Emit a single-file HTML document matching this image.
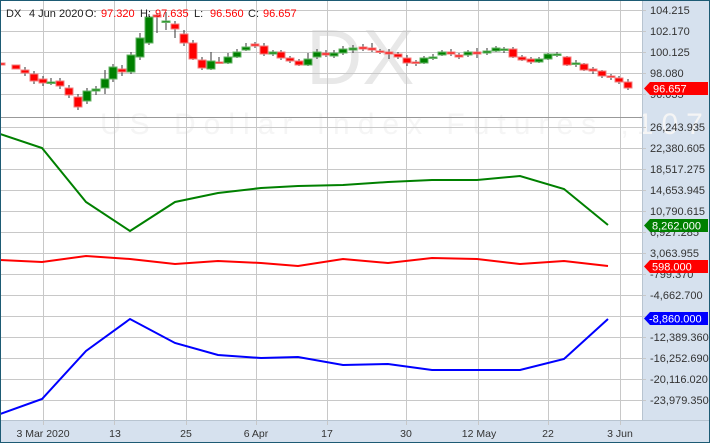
<!DOCTYPE html>
<html><head><meta charset="utf-8"><style>
html,body{margin:0;padding:0;background:#fff;}
body{width:710px;height:443px;overflow:hidden;font-family:"Liberation Sans",sans-serif;}
</style></head><body>
<svg width="710" height="443" xmlns="http://www.w3.org/2000/svg" font-family="Liberation Sans, sans-serif">
<rect width="710" height="443" fill="#fff"/>
<rect x="642" y="0" width="68" height="443" fill="#d6e1ee"/>
<rect x="0" y="420" width="710" height="23" fill="#d6e1ee"/>
<text x="306" y="84" font-size="78" fill="#e8e8e8">DX</text>
<text x="100" y="134" font-size="30" fill="#f5f5f5" letter-spacing="8">US Dollar Index Futures ,107</text>
<g stroke="#c8c8c8" stroke-width="1">
<line x1="0" y1="10.5" x2="646" y2="10.5"/><line x1="0" y1="31.5" x2="646" y2="31.5"/><line x1="0" y1="52.5" x2="646" y2="52.5"/><line x1="0" y1="73.5" x2="646" y2="73.5"/><line x1="0" y1="94.5" x2="646" y2="94.5"/>
<line x1="0" y1="127.5" x2="646" y2="127.5"/><line x1="0" y1="148.5" x2="646" y2="148.5"/><line x1="0" y1="169.5" x2="646" y2="169.5"/><line x1="0" y1="190.5" x2="646" y2="190.5"/><line x1="0" y1="211.5" x2="646" y2="211.5"/><line x1="0" y1="232.5" x2="646" y2="232.5"/><line x1="0" y1="253.5" x2="646" y2="253.5"/><line x1="0" y1="274.5" x2="646" y2="274.5"/><line x1="0" y1="295.5" x2="646" y2="295.5"/><line x1="0" y1="316.5" x2="646" y2="316.5"/><line x1="0" y1="337.5" x2="646" y2="337.5"/><line x1="0" y1="358.5" x2="646" y2="358.5"/><line x1="0" y1="379.5" x2="646" y2="379.5"/><line x1="0" y1="400.5" x2="646" y2="400.5"/>
<line x1="43.5" y1="0" x2="43.5" y2="425"/><line x1="114.5" y1="0" x2="114.5" y2="425"/><line x1="186.5" y1="0" x2="186.5" y2="425"/><line x1="256.5" y1="0" x2="256.5" y2="425"/><line x1="327.5" y1="0" x2="327.5" y2="425"/><line x1="406.5" y1="0" x2="406.5" y2="425"/><line x1="478.5" y1="0" x2="478.5" y2="425"/><line x1="548.5" y1="0" x2="548.5" y2="425"/><line x1="620.5" y1="0" x2="620.5" y2="425"/>
</g>
<line x1="0" y1="117.5" x2="642" y2="117.5" stroke="#999"/>
<line x1="0" y1="420.5" x2="710" y2="420.5" stroke="#b8c4d0"/>
<line x1="642.5" y1="0" x2="642.5" y2="420" stroke="#b8c4d0"/>
<g>
<g stroke="#333" stroke-width="1">
<line x1="25" y1="67" x2="25" y2="76"/><line x1="34" y1="71" x2="34" y2="84"/><line x1="43" y1="76" x2="43" y2="86"/><line x1="51" y1="78" x2="51" y2="85"/><line x1="60" y1="78" x2="60" y2="89"/><line x1="69" y1="85" x2="69" y2="98"/><line x1="78" y1="94" x2="78" y2="110"/><line x1="87" y1="88" x2="87" y2="104"/><line x1="96" y1="86" x2="96" y2="95"/><line x1="105" y1="70" x2="105" y2="94"/><line x1="113" y1="64" x2="113" y2="82"/><line x1="122" y1="65" x2="122" y2="76"/><line x1="131" y1="52" x2="131" y2="74"/><line x1="140" y1="33" x2="140" y2="60"/><line x1="149" y1="14" x2="149" y2="45"/><line x1="157" y1="13" x2="157" y2="33"/><line x1="166" y1="12" x2="166" y2="30"/><line x1="175" y1="21" x2="175" y2="38"/><line x1="184" y1="30" x2="184" y2="46"/><line x1="193" y1="40" x2="193" y2="60"/><line x1="202" y1="57" x2="202" y2="70"/><line x1="211" y1="52" x2="211" y2="70"/><line x1="219" y1="57" x2="219" y2="64"/><line x1="228" y1="53" x2="228" y2="64"/><line x1="237" y1="49" x2="237" y2="58"/><line x1="246" y1="43" x2="246" y2="51"/><line x1="255" y1="42" x2="255" y2="48"/><line x1="264" y1="43" x2="264" y2="56"/><line x1="273" y1="50" x2="273" y2="56"/><line x1="281" y1="50" x2="281" y2="60"/><line x1="290" y1="56" x2="290" y2="63"/><line x1="299" y1="59" x2="299" y2="66"/><line x1="308" y1="53" x2="308" y2="66"/><line x1="317" y1="49" x2="317" y2="59"/><line x1="326" y1="50" x2="326" y2="57"/><line x1="334" y1="50" x2="334" y2="58"/><line x1="343" y1="46" x2="343" y2="55"/><line x1="353" y1="45" x2="353" y2="53"/><line x1="363" y1="44" x2="363" y2="51"/><line x1="372" y1="43" x2="372" y2="52"/><line x1="380" y1="49" x2="380" y2="54"/><line x1="389" y1="49" x2="389" y2="59"/><line x1="398" y1="52" x2="398" y2="59"/><line x1="407" y1="55" x2="407" y2="66"/><line x1="416" y1="60" x2="416" y2="66"/><line x1="424" y1="56" x2="424" y2="64"/><line x1="433" y1="54" x2="433" y2="60"/><line x1="442" y1="50" x2="442" y2="56"/><line x1="451" y1="49" x2="451" y2="56"/><line x1="459" y1="53" x2="459" y2="59"/><line x1="468" y1="50" x2="468" y2="57"/><line x1="477" y1="48" x2="477" y2="58"/><line x1="487" y1="48" x2="487" y2="55"/><line x1="496" y1="46" x2="496" y2="52"/><line x1="504" y1="47" x2="504" y2="53"/><line x1="513" y1="47" x2="513" y2="58"/><line x1="522" y1="55" x2="522" y2="61"/><line x1="531" y1="57" x2="531" y2="64"/><line x1="539" y1="57" x2="539" y2="63"/><line x1="548" y1="53" x2="548" y2="60"/><line x1="557" y1="52" x2="557" y2="57"/><line x1="567" y1="56" x2="567" y2="66"/><line x1="576" y1="60" x2="576" y2="67"/><line x1="584" y1="63" x2="584" y2="71"/><line x1="593" y1="67" x2="593" y2="74"/><line x1="602" y1="70" x2="602" y2="78"/><line x1="611" y1="74" x2="611" y2="80"/><line x1="619" y1="76" x2="619" y2="84"/><line x1="628" y1="79" x2="628" y2="90"/>
</g>
<g fill="#ff0000" stroke="#f08080">
<rect x="0" y="63" width="5" height="2"/><rect x="12" y="65" width="8" height="4"/><rect x="21" y="70" width="8" height="3"/><rect x="30" y="74" width="8" height="7"/><rect x="39" y="79" width="8" height="4"/><rect x="56" y="81" width="8" height="5"/><rect x="65" y="88" width="8" height="7"/><rect x="74" y="97" width="8" height="10"/><rect x="118" y="69" width="8" height="3"/><rect x="153" y="15" width="8" height="2"/><rect x="171" y="24" width="8" height="5"/><rect x="180" y="34" width="8" height="9"/><rect x="189" y="43" width="8" height="16"/><rect x="198" y="60" width="8" height="8"/><rect x="215" y="62" width="8" height="1.5"/><rect x="251" y="44" width="8" height="2"/><rect x="260" y="46" width="8" height="8"/><rect x="277" y="52" width="8" height="6"/><rect x="286" y="58" width="8" height="3"/><rect x="295" y="61" width="8" height="4"/><rect x="322" y="53" width="8" height="2"/>
<rect x="359" y="47" width="8" height="2"/><rect x="368" y="48" width="8" height="2"/><rect x="376" y="51" width="8" height="1.5"/><rect x="385" y="52" width="8" height="2"/><rect x="394" y="54" width="8" height="3"/><rect x="403" y="58" width="8" height="5"/><rect x="412" y="62" width="8" height="1.5"/><rect x="447" y="52" width="8" height="2"/><rect x="455" y="55" width="8" height="2"/><rect x="473" y="52" width="8" height="2"/><rect x="509" y="49" width="8" height="8"/><rect x="518" y="57" width="8" height="3"/><rect x="527" y="59" width="8" height="3"/><rect x="563" y="57" width="8" height="8"/><rect x="580" y="64" width="8" height="6"/><rect x="589" y="69" width="8" height="2"/><rect x="598" y="71" width="8" height="5"/><rect x="607" y="76" width="8" height="1.5"/><rect x="615" y="78" width="8" height="4"/><rect x="624" y="82" width="8" height="6"/>
</g>
<g fill="#008000" stroke="#66b366">
<rect x="47" y="82" width="8" height="1.5"/><rect x="83" y="91" width="8" height="10"/><rect x="92" y="89" width="8" height="2"/><rect x="101" y="79" width="8" height="9"/><rect x="109" y="67" width="8" height="12"/><rect x="127" y="55" width="8" height="17"/><rect x="136" y="38" width="8" height="19"/><rect x="145" y="17" width="8" height="26"/><rect x="162" y="21" width="8" height="1.5"/><rect x="207" y="61" width="8" height="8"/><rect x="224" y="57" width="8" height="6"/><rect x="233" y="52" width="8" height="5"/><rect x="242" y="47" width="8" height="3"/><rect x="269" y="52" width="8" height="2"/><rect x="304" y="59" width="8" height="6"/><rect x="313" y="52" width="8" height="5"/><rect x="330" y="53" width="8" height="3"/><rect x="339" y="49" width="8" height="4"/><rect x="349" y="48" width="8" height="2"/>
<rect x="420" y="58" width="8" height="5"/><rect x="429" y="57" width="8" height="1.5"/><rect x="438" y="52" width="8" height="3"/><rect x="464" y="52" width="8" height="3"/><rect x="483" y="51" width="8" height="2"/><rect x="492" y="48" width="8" height="3"/><rect x="500" y="49" width="8" height="1.5"/><rect x="535" y="59" width="8" height="3"/><rect x="544" y="54" width="8" height="5"/><rect x="553" y="54" width="8" height="1.5"/><rect x="572" y="63" width="8" height="1.5"/>
</g>
</g>
<polyline fill="none" stroke="#008000" stroke-width="2" points="0,134 42,148 86,202 130,231 175,202 218,193 261,188 298,186 343,185 388,182 432,180 477,180 520,176 564,189 608,225"/>
<polyline fill="none" stroke="#ff0000" stroke-width="2" points="0,260 42,262 86,256 130,259 175,264 218,261 261,263 298,266 343,259 388,263 432,258 477,259 520,264 564,261 608,266"/>
<polyline fill="none" stroke="#0000ff" stroke-width="2" points="0,414 42,399 86,351 130,319 175,343 218,355 261,358 298,357 343,365 388,364 432,370 477,370 520,370 564,359 608,319"/>
<g font-size="11">
<text x="6" y="17" fill="#222">DX</text>
<text x="29" y="17" fill="#222">4 Jun 2020</text>
<text x="85" y="17" fill="#222">O:</text><text x="101" y="17" fill="#ff0000">97.320</text>
<text x="140" y="17" fill="#222">H:</text><text x="155" y="17" fill="#ff0000">97.635</text>
<text x="194" y="17" fill="#222">L:</text><text x="210" y="17" fill="#ff0000">96.560</text>
<text x="248" y="17" fill="#222">C:</text><text x="263" y="17" fill="#ff0000">96.657</text>
</g>
<g font-size="11" fill="#333">
<text x="650" y="14">104.215</text><text x="650" y="35">102.170</text><text x="650" y="56">100.125</text><text x="650" y="77">98.080</text><text x="650" y="98">96.035</text>
<text x="650" y="131">26,243.935</text><text x="650" y="152">22,380.605</text><text x="650" y="173">18,517.275</text><text x="650" y="194">14,653.945</text><text x="650" y="215">10,790.615</text><text x="650" y="236">6,927.285</text><text x="650" y="257">3,063.955</text><text x="650" y="278">-799.370</text><text x="650" y="299">-4,662.700</text><text x="650" y="341">-12,389.360</text><text x="650" y="362">-16,252.690</text><text x="650" y="383">-20,116.020</text><text x="650" y="404">-23,979.350</text>
</g>
<polygon points="644,88.5 650,82 708,82 708,95 650,95" fill="#ff0000"/>
<text x="653" y="92.5" font-size="11" fill="#fff">96.657</text>
<polygon points="644,225.5 650,219 708,219 708,232 650,232" fill="#008000"/>
<text x="652" y="229.5" font-size="11" fill="#fff">8,262.000</text>
<polygon points="644,266.5 650,260 708,260 708,273 650,273" fill="#ff0000"/>
<text x="652" y="270.5" font-size="11" fill="#fff">598.000</text>
<polygon points="644,318.5 650,312 708,312 708,325 650,325" fill="#0000ff"/>
<text x="649" y="322.5" font-size="11" fill="#fff">-8,860.000</text>
<g font-size="10.5" fill="#333" text-anchor="middle">
<text x="43" y="437">3 Mar 2020</text><text x="115" y="437">13</text><text x="186" y="437">25</text><text x="256" y="437">6 Apr</text><text x="327" y="437">17</text><text x="406" y="437">30</text><text x="479" y="437">12 May</text><text x="548" y="437">22</text><text x="620" y="437">3 Jun</text>
</g>
<rect x="0.5" y="0.5" width="709" height="442" fill="none" stroke="#1d5b74"/>
</svg>
</body></html>
